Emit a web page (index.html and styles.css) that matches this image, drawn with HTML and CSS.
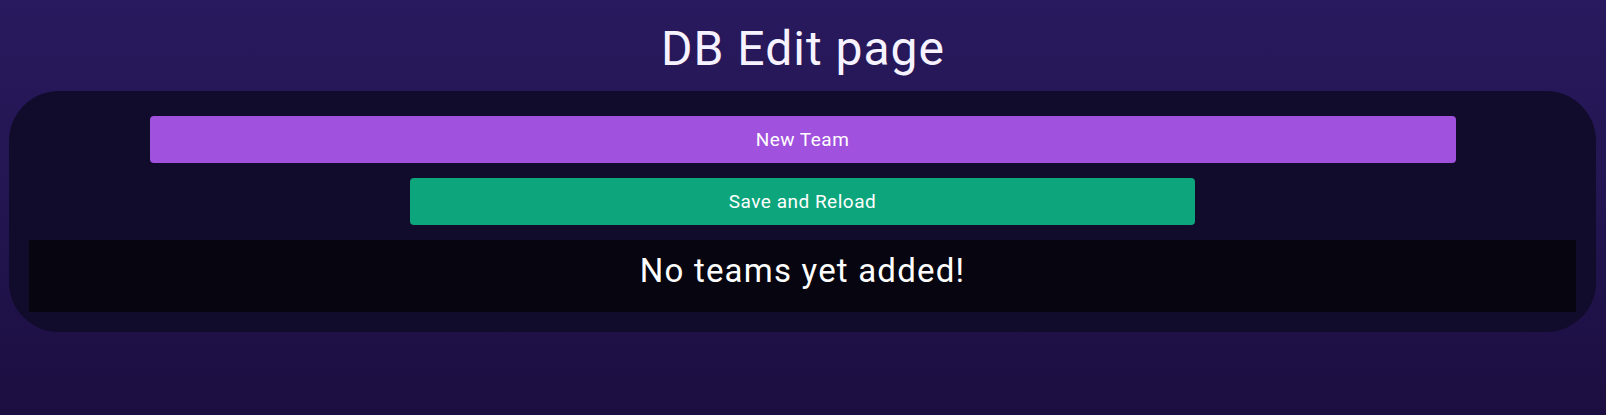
FILE: index.html
```html
<!DOCTYPE html>
<html lang="en">
<head>
<meta charset="utf-8">
<title>DB Edit page</title>
<link rel="stylesheet" href="styles.css">
</head>
<body>
<h1 class="title">DB Edit page</h1>
<main class="card">
  <button class="btn btn-new">New Team</button>
  <button class="btn btn-save">Save and Reload</button>
  <section class="teams">
    <h2 class="empty">No teams yet added!</h2>
  </section>
</main>
</body>
</html>
```
FILE: styles.css
```css
html, body {
  margin: 0;
  padding: 0;
}
body {
  min-height: 415px;
  background: linear-gradient(180deg, #29195e 0%, #231652 45%, #1c0e40 100%);
  font-family: Roboto, "Noto Sans", "Liberation Sans", sans-serif;
  color: #ffffff;
  overflow: hidden;
}
.title {
  margin: 0 0 14px 0;
  padding-top: 21px;
  font-size: 48px;
  font-weight: 400;
  line-height: 56px;
  letter-spacing: 1px;
  text-align: center;
  color: #f6f2ff;
}
.card {
  margin: 0 10px 0 9px;
  padding: 25px 20px 20px 20px;
  background: #110c2b;
  border-radius: 50px;
  display: flex;
  flex-direction: column;
  align-items: center;
  gap: 15px;
}
.btn {
  height: 47px;
  border: none;
  border-radius: 4px;
  color: #ffffff;
  font-family: Roboto, "Noto Sans", "Liberation Sans", sans-serif;
  font-size: 19px;
  letter-spacing: 0.5px;
  cursor: pointer;
}
.btn-new {
  width: 1306px;
  background: #a051dd;
}
.btn-save {
  width: 785px;
  background: #0da57c;
}
.teams {
  align-self: stretch;
  background: #07050f;
  height: 72px;
  box-sizing: border-box;
  padding-top: 11px;
}
.empty {
  margin: 0;
  font-size: 33px;
  font-weight: 400;
  letter-spacing: 1.2px;
  text-align: center;
  color: #ffffff;
}
```
